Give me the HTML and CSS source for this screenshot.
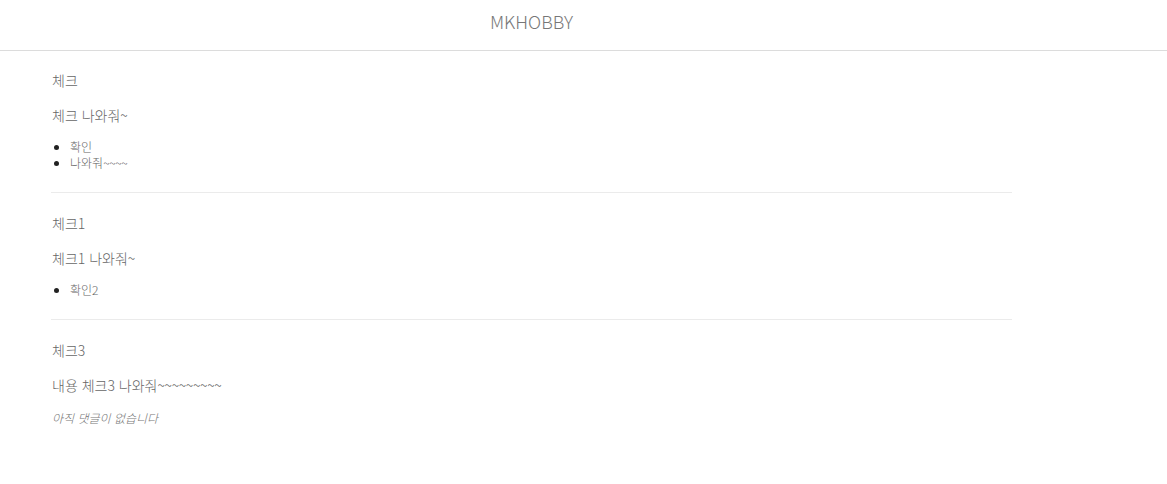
FILE: index.html
```html
<!DOCTYPE html>
<html lang="ko">
<head>
<meta charset="utf-8">
<title>MKHOBBY</title>
<link rel="stylesheet" href="styles.css">
</head>
<body>
<header class="site-header">
  <div class="container">
    <h1 class="brand">MKHOBBY</h1>
  </div>
</header>
<main class="container">
  <article class="post">
    <h2 class="post-title">체크</h2>
    <p class="post-body">체크 나와줘~</p>
    <ul class="post-list">
      <li>확인</li>
      <li>나와줘<span class="tilde">~~~~</span></li>
    </ul>
  </article>
  <article class="post">
    <h2 class="post-title">체크1</h2>
    <p class="post-body">체크1 나와줘~</p>
    <ul class="post-list">
      <li>확인2</li>
    </ul>
  </article>
  <article class="post post-last">
    <h2 class="post-title">체크3</h2>
    <p class="post-body">내용 체크3 나와줘<span class="tilde">~~~~~~~~~</span></p>
    <p class="no-comments">아직 댓글이 없습니다</p>
  </article>
</main>
</body>
</html>
```
FILE: styles.css
```css
html, body {
  margin: 0;
  padding: 0;
  background: #fff;
}
body {
  font-family: "Noto Sans CJK KR", "Noto Sans", sans-serif;
  font-weight: 300;
  color: #666;
}
.container {
  width: 961px;
  margin-left: 51px;
}
.site-header {
  height: 50px;
  border-bottom: 1px solid #dcdcdc;
}
.brand {
  margin: 0;
  padding-top: 8px;
  text-align: center;
  font-size: 18px;
  line-height: 26px;
  font-weight: 300;
  color: #777;
}
main.container {
  padding-top: 19px;
}
.post {
  border-bottom: 1px solid #ebebeb;
  padding-bottom: 21px;
  margin-bottom: 20px;
}
.post-last {
  border-bottom: none;
}
.post-title {
  margin: 0;
  font-size: 14px;
  line-height: 20px;
  font-weight: 300;
  color: #666;
  padding-left: 1px;
}
.post-body {
  margin: 15px 0 0;
  font-size: 14px;
  line-height: 20px;
  padding-left: 1px;
}
.tilde {
  letter-spacing: -0.4px;
}
.post-list {
  margin: 14px 0 0;
  padding-left: 19px;
  font-size: 12px;
  line-height: 16px;
}
.post-list li::marker {
  color: #222;
}
.no-comments {
  margin: 15px 0 0;
  font-size: 12px;
  line-height: 16px;
  font-style: italic;
  color: #777;
  padding-left: 1px;
}
```
